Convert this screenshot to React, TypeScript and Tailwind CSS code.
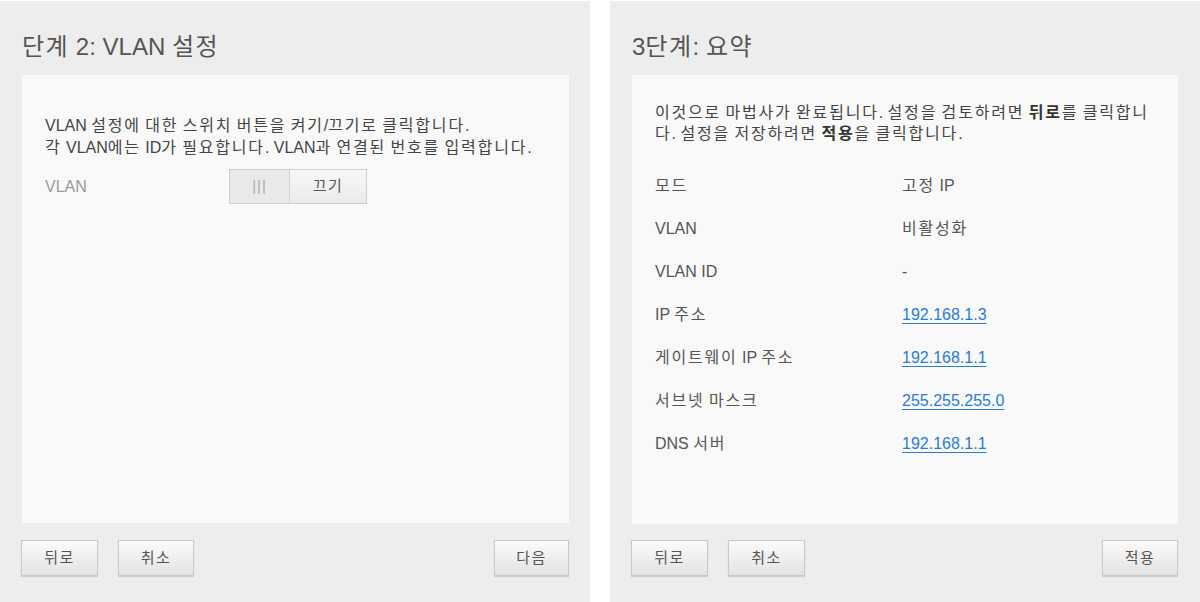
import React from "react";

const FONT = '"Liberation Sans", "Noto Sans CJK KR", Arial, sans-serif';
const HANGUL = /([\u3131-\u318E\uAC00-\uD7A3]+)/;

function K({ t, tr = "tracking-[1.8px]" }: { t: string; tr?: string }) {
  const parts = t.split(HANGUL);
  return (
    <span>
      {parts.map((p, i) =>
        HANGUL.test(p) ? (
          <span key={i} className={tr}>
            {p}
          </span>
        ) : (
          <React.Fragment key={i}>{p}</React.Fragment>
        )
      )}
    </span>
  );
}

function Btn({ label, w }: { label: string; w: string }) {
  return (
    <button
      className={`${w} h-[36px] border border-[#c9c9c9] bg-gradient-to-b from-[#fbfbfb] to-[#e3e3e3] text-[15px] text-[#555] shadow-[0_1px_1px_rgba(0,0,0,0.12)] flex items-center justify-center`}
      style={{ fontFamily: FONT }}
    >
      <K t={label} tr="tracking-[1.5px]" />
    </button>
  );
}

function Row({ label, value, link }: { label: string; value: string; link?: boolean }) {
  return (
    <div className="flex h-[43px] items-center text-[16px]">
      <div className="w-[247px] text-[#555]">
        <K t={label} />
      </div>
      {link ? (
        <a className="text-[#2a7bd3] underline underline-offset-[3px]" href="#">
          {value}
        </a>
      ) : (
        <div className="text-[#555]">
          <K t={value} />
        </div>
      )}
    </div>
  );
}

export default function App() {
  return (
    <div
      className="flex h-[602px] w-[1200px] gap-[20px] bg-white pt-[1px]"
      style={{ fontFamily: FONT }}
    >
      {/* Left panel */}
      <div className="flex w-[590px] flex-col bg-[#ededed] pl-[22px] pr-[21px]">
        <div className="flex h-[74px] items-center pt-[18px] text-[24px] text-[#555]">
          <K t="단계 2: VLAN 설정" tr="tracking-[1.5px]" />
        </div>
        <div className="h-[448px] bg-[#f9f9f9] pl-[23px] pr-[10px] pt-[40px]">
          <p className="text-[16px] leading-[22px] text-[#444]">
            <K t="VLAN 설정에 대한 스위치 버튼을 켜기/끄기로 클릭합니다." />
            <br />
            <K t="각 VLAN에는 ID가 필요합니다. VLAN과 연결된 번호를 입력합니다." />
          </p>
          <div className="mt-[10px] flex items-center">
            <div className="w-[184px] text-[16px] text-[#9a9a9a]">VLAN</div>
            <div className="flex h-[35px] border border-[#cfcfcf]">
              <div className="flex w-[60px] items-center justify-center border-r border-[#d4d4d4] bg-[#e9e9e9] text-[15px] tracking-[1px] text-[#aaa]">
                |||
              </div>
              <div className="flex w-[76px] items-center justify-center bg-gradient-to-b from-[#f7f7f7] to-[#ebebeb] text-[15px] text-[#555]">
                <K t="끄기" tr="tracking-[1.5px]" />
              </div>
            </div>
          </div>
        </div>
        <div className="mt-[17px] flex items-center">
          <div className="-ml-[1px] flex gap-[20px]">
            <Btn label="뒤로" w="w-[77px]" />
            <Btn label="취소" w="w-[76px]" />
          </div>
          <div className="ml-auto">
            <Btn label="다음" w="w-[75px]" />
          </div>
        </div>
      </div>

      {/* Right panel */}
      <div className="flex w-[590px] flex-col bg-[#ededed] pl-[22px] pr-[22px]">
        <div className="flex h-[74px] items-center pt-[18px] text-[24px] text-[#555]">
          <K t="3단계: 요약" tr="tracking-[1.5px]" />
        </div>
        <div className="h-[449px] bg-[#f9f9f9] pl-[23px] pr-[8px] pt-[27px]">
          <p className="text-[16px] leading-[21px] text-[#444]">
            <K t="이것으로 마법사가 완료됩니다. 설정을 검토하려면 " />
            <b className="font-bold text-[#333]">
              <K t="뒤로" />
            </b>
            <K t="를 클릭합니" />
            <br />
            <K t="다. 설정을 저장하려면 " />
            <b className="font-bold text-[#333]">
              <K t="적용" />
            </b>
            <K t="을 클릭합니다." />
          </p>
          <div className="mt-[20px]">
            <Row label="모드" value="고정 IP" />
            <Row label="VLAN" value="비활성화" />
            <Row label="VLAN ID" value="-" />
            <Row label="IP 주소" value="192.168.1.3" link />
            <Row label="게이트웨이 IP 주소" value="192.168.1.1" link />
            <Row label="서브넷 마스크" value="255.255.255.0" link />
            <Row label="DNS 서버" value="192.168.1.1" link />
          </div>
        </div>
        <div className="mt-[16px] flex items-center">
          <div className="-ml-[1px] flex gap-[20px]">
            <Btn label="뒤로" w="w-[77px]" />
            <Btn label="취소" w="w-[77px]" />
          </div>
          <div className="ml-auto">
            <Btn label="적용" w="w-[76px]" />
          </div>
        </div>
      </div>
    </div>
  );
}
